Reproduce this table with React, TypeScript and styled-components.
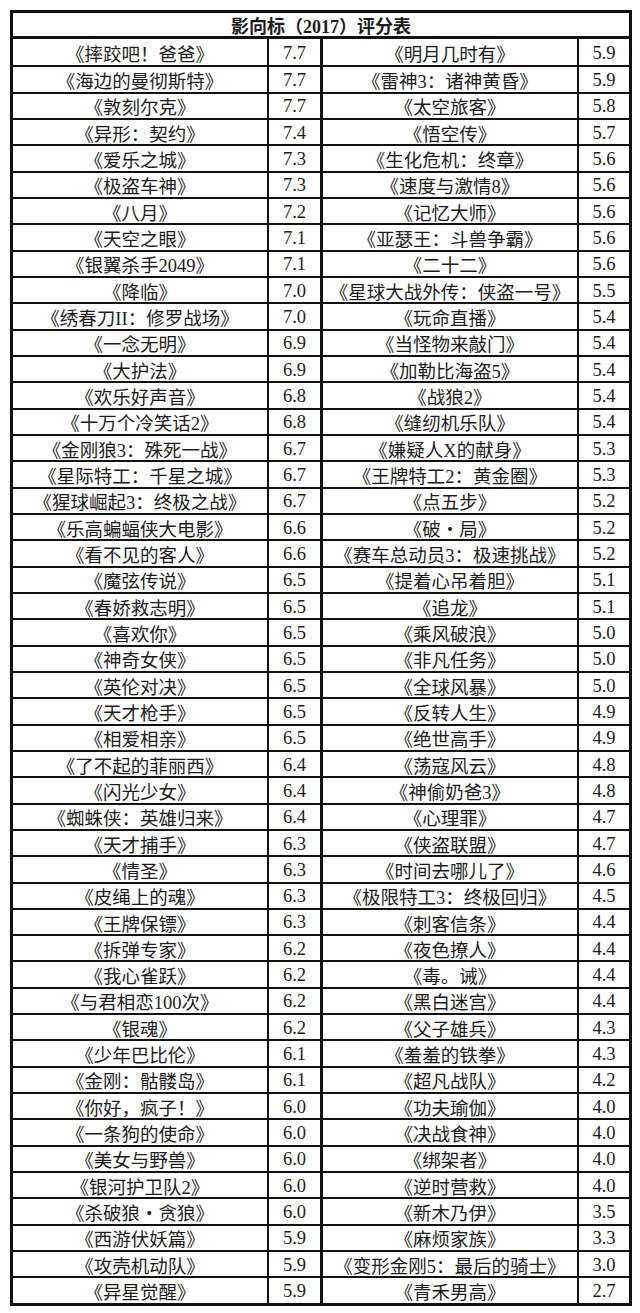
import { createGlobalStyle } from "styled-components";
import styled from "styled-components";

const GlobalStyle = createGlobalStyle`
  html, body {
    margin: 0;
    padding: 0;
    background: #fff;
  }
  body {
    font-family: "Liberation Serif", "Noto Sans CJK SC", serif;
    color: #1c1c1c;
  }
`;

type Film = [string, string];

const leftFilms: Film[] = [
  ["《摔跤吧！爸爸》", "7.7"],
  ["《海边的曼彻斯特》", "7.7"],
  ["《敦刻尔克》", "7.7"],
  ["《异形：契约》", "7.4"],
  ["《爱乐之城》", "7.3"],
  ["《极盗车神》", "7.3"],
  ["《八月》", "7.2"],
  ["《天空之眼》", "7.1"],
  ["《银翼杀手2049》", "7.1"],
  ["《降临》", "7.0"],
  ["《绣春刀II：修罗战场》", "7.0"],
  ["《一念无明》", "6.9"],
  ["《大护法》", "6.9"],
  ["《欢乐好声音》", "6.8"],
  ["《十万个冷笑话2》", "6.8"],
  ["《金刚狼3：殊死一战》", "6.7"],
  ["《星际特工：千星之城》", "6.7"],
  ["《猩球崛起3：终极之战》", "6.7"],
  ["《乐高蝙蝠侠大电影》", "6.6"],
  ["《看不见的客人》", "6.6"],
  ["《魔弦传说》", "6.5"],
  ["《春娇救志明》", "6.5"],
  ["《喜欢你》", "6.5"],
  ["《神奇女侠》", "6.5"],
  ["《英伦对决》", "6.5"],
  ["《天才枪手》", "6.5"],
  ["《相爱相亲》", "6.5"],
  ["《了不起的菲丽西》", "6.4"],
  ["《闪光少女》", "6.4"],
  ["《蜘蛛侠：英雄归来》", "6.4"],
  ["《天才捕手》", "6.3"],
  ["《情圣》", "6.3"],
  ["《皮绳上的魂》", "6.3"],
  ["《王牌保镖》", "6.3"],
  ["《拆弹专家》", "6.2"],
  ["《我心雀跃》", "6.2"],
  ["《与君相恋100次》", "6.2"],
  ["《银魂》", "6.2"],
  ["《少年巴比伦》", "6.1"],
  ["《金刚：骷髅岛》", "6.1"],
  ["《你好，疯子！》", "6.0"],
  ["《一条狗的使命》", "6.0"],
  ["《美女与野兽》", "6.0"],
  ["《银河护卫队2》", "6.0"],
  ["《杀破狼・贪狼》", "6.0"],
  ["《西游伏妖篇》", "5.9"],
  ["《攻壳机动队》", "5.9"],
  ["《异星觉醒》", "5.9"],
];

const rightFilms: Film[] = [
  ["《明月几时有》", "5.9"],
  ["《雷神3：诸神黄昏》", "5.9"],
  ["《太空旅客》", "5.8"],
  ["《悟空传》", "5.7"],
  ["《生化危机：终章》", "5.6"],
  ["《速度与激情8》", "5.6"],
  ["《记忆大师》", "5.6"],
  ["《亚瑟王：斗兽争霸》", "5.6"],
  ["《二十二》", "5.6"],
  ["《星球大战外传：侠盗一号》", "5.5"],
  ["《玩命直播》", "5.4"],
  ["《当怪物来敲门》", "5.4"],
  ["《加勒比海盗5》", "5.4"],
  ["《战狼2》", "5.4"],
  ["《缝纫机乐队》", "5.4"],
  ["《嫌疑人X的献身》", "5.3"],
  ["《王牌特工2：黄金圈》", "5.3"],
  ["《点五步》", "5.2"],
  ["《破・局》", "5.2"],
  ["《赛车总动员3：极速挑战》", "5.2"],
  ["《提着心吊着胆》", "5.1"],
  ["《追龙》", "5.1"],
  ["《乘风破浪》", "5.0"],
  ["《非凡任务》", "5.0"],
  ["《全球风暴》", "5.0"],
  ["《反转人生》", "4.9"],
  ["《绝世高手》", "4.9"],
  ["《荡寇风云》", "4.8"],
  ["《神偷奶爸3》", "4.8"],
  ["《心理罪》", "4.7"],
  ["《侠盗联盟》", "4.7"],
  ["《时间去哪儿了》", "4.6"],
  ["《极限特工3：终极回归》", "4.5"],
  ["《刺客信条》", "4.4"],
  ["《夜色撩人》", "4.4"],
  ["《毒。诫》", "4.4"],
  ["《黑白迷宫》", "4.4"],
  ["《父子雄兵》", "4.3"],
  ["《羞羞的铁拳》", "4.3"],
  ["《超凡战队》", "4.2"],
  ["《功夫瑜伽》", "4.0"],
  ["《决战食神》", "4.0"],
  ["《绑架者》", "4.0"],
  ["《逆时营救》", "4.0"],
  ["《新木乃伊》", "3.5"],
  ["《麻烦家族》", "3.3"],
  ["《变形金刚5：最后的骑士》", "3.0"],
  ["《青禾男高》", "2.7"],
];

const Page = styled.div`
  padding: 10px 8px 8px 10px;
`;

const Sheet = styled.div`
  width: 622px;
  box-sizing: border-box;
  border: 3px solid #111;
  background: #fff;
`;

const TitleBar = styled.div`
  height: 26px;
  box-sizing: border-box;
  border-bottom: 3px solid #111;
  display: flex;
  align-items: center;
  justify-content: center;
  font-size: 18px;
  font-weight: 700;
  padding-top: 1px;
`;

const Row = styled.div<{ $first?: boolean }>`
  display: grid;
  grid-template-columns: 256px 54px 256px 50px;
  height: 26.33px;
  box-sizing: border-box;
  border-top: ${(p) => (p.$first ? "0" : "2px solid #111")};
`;

const Cell = styled.div<{ $divider?: "thin" | "thick" | "none" }>`
  display: flex;
  align-items: center;
  justify-content: center;
  box-sizing: border-box;
  white-space: nowrap;
  overflow: hidden;
  border-right: ${(p) =>
    p.$divider === "thick"
      ? "3px solid #111"
      : p.$divider === "thin"
      ? "2px solid #111"
      : "0"};
`;

const Title = styled(Cell)`
  font-size: 18.5px;
  padding-top: 1px;
`;

const Score = styled(Cell)`
  font-size: 18.5px;
  padding-top: 2px;
`;

export default function App() {
  return (
    <Page>
      <GlobalStyle />
      <Sheet>
        <TitleBar>影向标（2017）评分表</TitleBar>
        {leftFilms.map((left, i) => {
          const right = rightFilms[i];
          return (
            <Row key={left[0]} $first={i === 0}>
              <Title $divider="thin">{left[0]}</Title>
              <Score $divider="thick">{left[1]}</Score>
              <Title $divider="thin">{right[0]}</Title>
              <Score $divider="none">{right[1]}</Score>
            </Row>
          );
        })}
      </Sheet>
    </Page>
  );
}
